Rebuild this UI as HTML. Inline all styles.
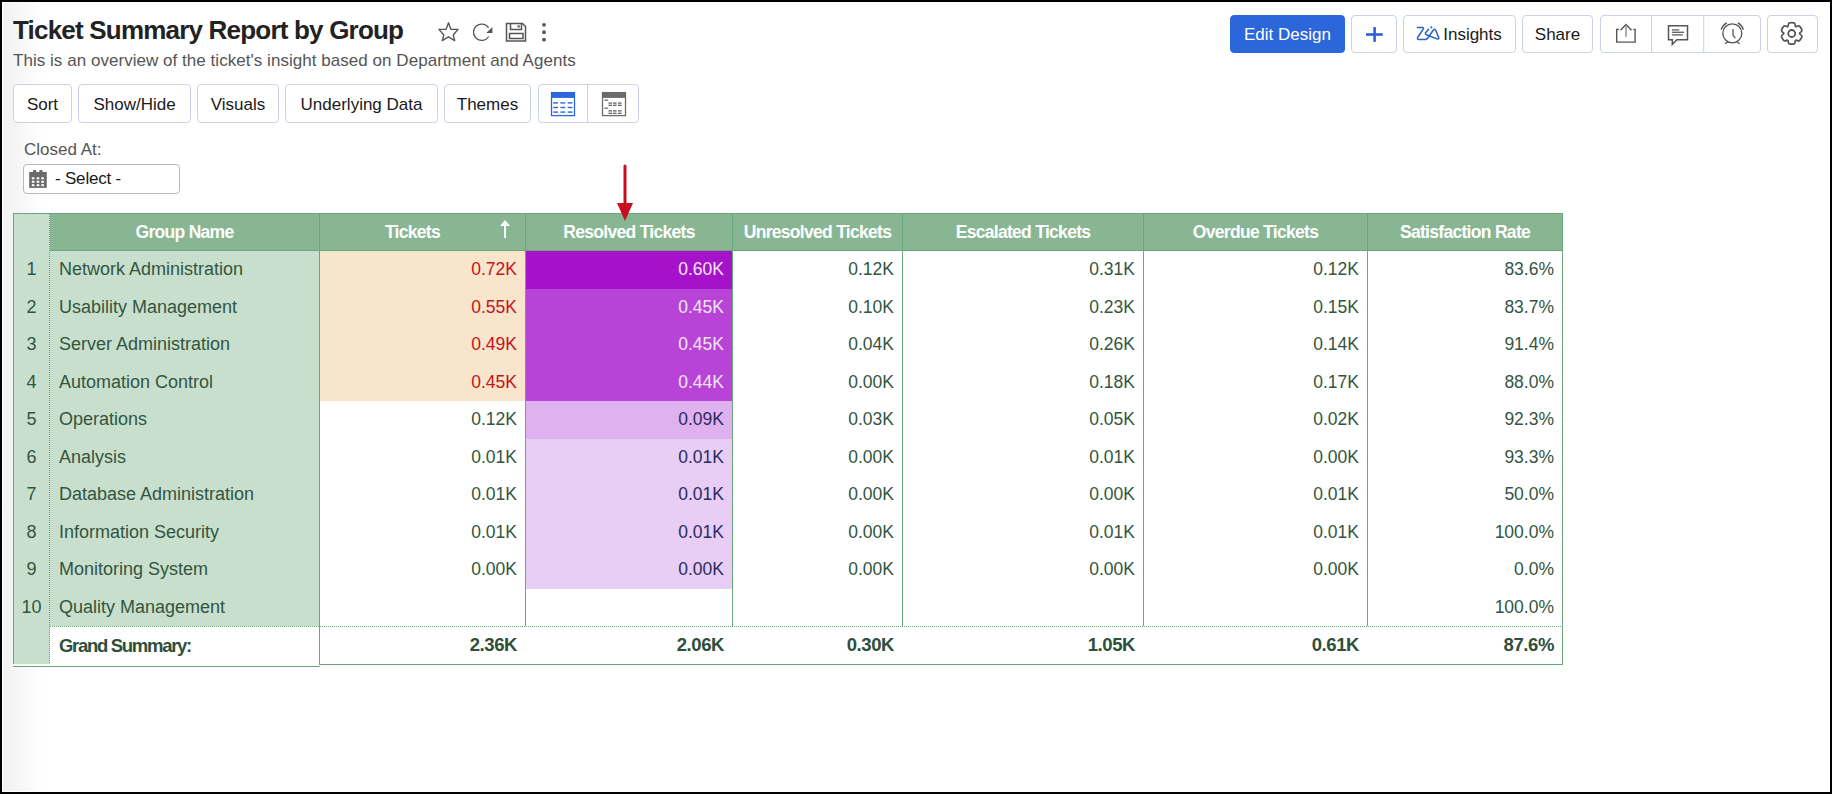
<!DOCTYPE html>
<html><head><meta charset="utf-8">
<style>
*{box-sizing:border-box;margin:0;padding:0}
html,body{width:1832px;height:794px;overflow:hidden;background:#fff}
body{font-family:"Liberation Sans",sans-serif;position:relative}
.r{position:absolute}
.bk{position:absolute;background:#000}
#grad{position:absolute;left:3px;top:3px;width:40px;height:788px;background:linear-gradient(90deg,#f1f1f1,#f5f5f5 30%,#fff)}
.abs{position:absolute;white-space:nowrap}
#title{left:13px;top:15px;font-size:26px;font-weight:bold;color:#222;letter-spacing:-0.8px}
#sub{left:13px;top:51px;font-size:17px;color:#555;letter-spacing:0.04px}
.btn{position:absolute;border:1px solid #c9d1ee;border-radius:4px;background:#fff;font-size:17px;padding-top:2px;color:#1a1a1a;display:flex;align-items:center;justify-content:center;white-space:nowrap}
.tb{top:84px;height:39px}
.rb{top:15px;height:38px}
.hd{position:absolute;top:214px;height:36px;color:#fff;font-weight:bold;font-size:17.5px;letter-spacing:-0.7px;padding-top:1px;display:flex;align-items:center;justify-content:center;white-space:nowrap}
.c{position:absolute;height:37.5px;line-height:36.5px;font-size:17.5px;color:#33553f;white-space:nowrap}
.rn{left:14px;width:35px;text-align:center;font-size:18px}
.nm{left:59px;font-size:18px}
.gs{left:59px;font-weight:bold;color:#2e4f3a;font-size:18.5px;letter-spacing:-1.3px;height:37px;line-height:37px}
.b{font-weight:bold;height:37px;line-height:36px;font-size:18.5px;letter-spacing:-0.4px;color:#2e4f3a}
</style></head>
<body>
<div id="grad"></div>
<div class="bk" style="left:0;top:0;width:1832px;height:2px"></div>
<div class="bk" style="left:0;top:792px;width:1832px;height:2px"></div>
<div class="bk" style="left:0;top:0;width:2px;height:794px"></div>
<div class="bk" style="left:1830px;top:0;width:2px;height:794px"></div>

<div id="title" class="abs">Ticket Summary Report by Group</div>
<div id="sub" class="abs">This is an overview of the ticket's insight based on Department and Agents</div>

<div class="btn tb" style="left:13px;width:59px">Sort</div>
<div class="btn tb" style="left:78px;width:113px">Show/Hide</div>
<div class="btn tb" style="left:197px;width:82px">Visuals</div>
<div class="btn tb" style="left:285px;width:153px">Underlying Data</div>
<div class="btn tb" style="left:444px;width:87px">Themes</div>
<div class="btn tb" style="left:538px;width:101px"></div>

<div class="abs" style="left:24px;top:140px;font-size:17px;color:#555">Closed At:</div>
<div class="btn" style="left:23px;top:164px;width:157px;height:30px;justify-content:flex-start;padding-left:31px;padding-top:0;border-color:#b5b8c2;letter-spacing:-0.2px">- Select -</div>

<div class="btn rb" style="left:1230px;width:115px;background:#2b66da;border-color:#2b66da;color:#fff">Edit Design</div>
<div class="btn rb" style="left:1351px;width:46px"></div>
<div class="btn rb" style="left:1403px;width:113px;padding-left:26px">Insights</div>
<div class="btn rb" style="left:1522px;width:71px">Share</div>
<div class="btn rb" style="left:1600px;width:161px"></div>
<div class="btn rb" style="left:1767px;width:51px"></div>

<div class="r" style="left:14px;top:214px;width:35px;height:450px;background:#c8dfcd"></div>
<div class="r" style="left:50px;top:251px;width:269px;height:375px;background:#c8dfcd"></div>
<div class="r" style="left:50px;top:214px;width:1512px;height:36px;background:#88b693"></div>
<div class="r" style="left:320px;top:251px;width:205px;height:150px;background:#f9e4cc"></div>
<div class="r" style="left:526px;top:251.0px;width:206px;height:37.5px;background:#a512c9"></div>
<div class="r" style="left:526px;top:288.5px;width:206px;height:37.5px;background:#b844d7"></div>
<div class="r" style="left:526px;top:326.0px;width:206px;height:37.5px;background:#b844d7"></div>
<div class="r" style="left:526px;top:363.5px;width:206px;height:37.5px;background:#b844d7"></div>
<div class="r" style="left:526px;top:401.0px;width:206px;height:37.5px;background:#dfb1ef"></div>
<div class="r" style="left:526px;top:438.5px;width:206px;height:37.5px;background:#e8cdf5"></div>
<div class="r" style="left:526px;top:476.0px;width:206px;height:37.5px;background:#e8cdf5"></div>
<div class="r" style="left:526px;top:513.5px;width:206px;height:37.5px;background:#e8cdf5"></div>
<div class="r" style="left:526px;top:551.0px;width:206px;height:37.5px;background:#e8cdf5"></div>
<div class="r" style="left:13px;top:213px;width:1550px;height:1px;background:#6aa77a"></div>
<div class="r" style="left:50px;top:250px;width:1512px;height:1px;background:#6aa77a"></div>
<div class="r" style="left:13px;top:213px;width:1px;height:451px;background:#6aa77a"></div>
<div class="r" style="left:13px;top:666px;width:307px;height:1px;background:#6aa77a"></div>
<div class="r" style="left:319px;top:664px;width:1244px;height:1px;background:#6aa77a"></div>
<div class="r" style="left:1562px;top:213px;width:1px;height:452px;background:#6aa77a"></div>
<div class="r" style="left:319px;top:213px;width:1px;height:452px;background:#6aa77a"></div>
<div class="r" style="left:525px;top:213px;width:1px;height:413px;background:#6aa77a"></div>
<div class="r" style="left:732px;top:213px;width:1px;height:413px;background:#6aa77a"></div>
<div class="r" style="left:902px;top:213px;width:1px;height:413px;background:#6aa77a"></div>
<div class="r" style="left:1143px;top:213px;width:1px;height:413px;background:#6aa77a"></div>
<div class="r" style="left:1367px;top:213px;width:1px;height:413px;background:#6aa77a"></div>
<div class="r" style="left:49px;top:214px;width:1px;height:450px;background:repeating-linear-gradient(180deg,#6aa77a 0 1px,#c8dfcd 1px 2px)"></div>
<div class="r" style="left:50px;top:626px;width:1512px;height:1px;background:repeating-linear-gradient(90deg,#6aa77a 0 1px,transparent 1px 2px)"></div>
<div class="r" style="left:50px;top:627px;width:269px;height:37px;background:#fff"></div>
<div class="hd" style="left:50px;width:269px;">Group Name</div>
<div class="hd" style="left:320px;width:205px;padding-right:20px;">Tickets</div>
<div class="hd" style="left:526px;width:206px;">Resolved Tickets</div>
<div class="hd" style="left:733px;width:169px;">Unresolved Tickets</div>
<div class="hd" style="left:903px;width:240px;">Escalated Tickets</div>
<div class="hd" style="left:1144px;width:223px;">Overdue Tickets</div>
<div class="hd" style="left:1368px;width:194px;">Satisfaction Rate</div>
<svg class="r" style="left:498px;top:218px" width="14" height="22" viewBox="0 0 14 22"><path d="M2 8 L7 2 L12 8 Z" fill="#fff"/><rect x="6" y="7" width="2" height="13" fill="#fff"/></svg>
<div class="c rn" style="top:251.0px">1</div>
<div class="c nm" style="top:251.0px">Network Administration</div>
<div class="c num" style="top:251.0px;right:1315px;color:#c41420">0.72K</div>
<div class="c num" style="top:251.0px;right:1108px;color:#f3e6f7">0.60K</div>
<div class="c num" style="top:251.0px;right:938px;color:#33553f">0.12K</div>
<div class="c num" style="top:251.0px;right:697px;color:#33553f">0.31K</div>
<div class="c num" style="top:251.0px;right:473px;color:#33553f">0.12K</div>
<div class="c num" style="top:251.0px;right:278px;color:#33553f">83.6%</div>
<div class="c rn" style="top:288.5px">2</div>
<div class="c nm" style="top:288.5px">Usability Management</div>
<div class="c num" style="top:288.5px;right:1315px;color:#c41420">0.55K</div>
<div class="c num" style="top:288.5px;right:1108px;color:#f3e6f7">0.45K</div>
<div class="c num" style="top:288.5px;right:938px;color:#33553f">0.10K</div>
<div class="c num" style="top:288.5px;right:697px;color:#33553f">0.23K</div>
<div class="c num" style="top:288.5px;right:473px;color:#33553f">0.15K</div>
<div class="c num" style="top:288.5px;right:278px;color:#33553f">83.7%</div>
<div class="c rn" style="top:326.0px">3</div>
<div class="c nm" style="top:326.0px">Server Administration</div>
<div class="c num" style="top:326.0px;right:1315px;color:#c41420">0.49K</div>
<div class="c num" style="top:326.0px;right:1108px;color:#f3e6f7">0.45K</div>
<div class="c num" style="top:326.0px;right:938px;color:#33553f">0.04K</div>
<div class="c num" style="top:326.0px;right:697px;color:#33553f">0.26K</div>
<div class="c num" style="top:326.0px;right:473px;color:#33553f">0.14K</div>
<div class="c num" style="top:326.0px;right:278px;color:#33553f">91.4%</div>
<div class="c rn" style="top:363.5px">4</div>
<div class="c nm" style="top:363.5px">Automation Control</div>
<div class="c num" style="top:363.5px;right:1315px;color:#c41420">0.45K</div>
<div class="c num" style="top:363.5px;right:1108px;color:#f3e6f7">0.44K</div>
<div class="c num" style="top:363.5px;right:938px;color:#33553f">0.00K</div>
<div class="c num" style="top:363.5px;right:697px;color:#33553f">0.18K</div>
<div class="c num" style="top:363.5px;right:473px;color:#33553f">0.17K</div>
<div class="c num" style="top:363.5px;right:278px;color:#33553f">88.0%</div>
<div class="c rn" style="top:401.0px">5</div>
<div class="c nm" style="top:401.0px">Operations</div>
<div class="c num" style="top:401.0px;right:1315px;color:#33553f">0.12K</div>
<div class="c num" style="top:401.0px;right:1108px;color:#2d2a5c">0.09K</div>
<div class="c num" style="top:401.0px;right:938px;color:#33553f">0.03K</div>
<div class="c num" style="top:401.0px;right:697px;color:#33553f">0.05K</div>
<div class="c num" style="top:401.0px;right:473px;color:#33553f">0.02K</div>
<div class="c num" style="top:401.0px;right:278px;color:#33553f">92.3%</div>
<div class="c rn" style="top:438.5px">6</div>
<div class="c nm" style="top:438.5px">Analysis</div>
<div class="c num" style="top:438.5px;right:1315px;color:#33553f">0.01K</div>
<div class="c num" style="top:438.5px;right:1108px;color:#2d2a5c">0.01K</div>
<div class="c num" style="top:438.5px;right:938px;color:#33553f">0.00K</div>
<div class="c num" style="top:438.5px;right:697px;color:#33553f">0.01K</div>
<div class="c num" style="top:438.5px;right:473px;color:#33553f">0.00K</div>
<div class="c num" style="top:438.5px;right:278px;color:#33553f">93.3%</div>
<div class="c rn" style="top:476.0px">7</div>
<div class="c nm" style="top:476.0px">Database Administration</div>
<div class="c num" style="top:476.0px;right:1315px;color:#33553f">0.01K</div>
<div class="c num" style="top:476.0px;right:1108px;color:#2d2a5c">0.01K</div>
<div class="c num" style="top:476.0px;right:938px;color:#33553f">0.00K</div>
<div class="c num" style="top:476.0px;right:697px;color:#33553f">0.00K</div>
<div class="c num" style="top:476.0px;right:473px;color:#33553f">0.01K</div>
<div class="c num" style="top:476.0px;right:278px;color:#33553f">50.0%</div>
<div class="c rn" style="top:513.5px">8</div>
<div class="c nm" style="top:513.5px">Information Security</div>
<div class="c num" style="top:513.5px;right:1315px;color:#33553f">0.01K</div>
<div class="c num" style="top:513.5px;right:1108px;color:#2d2a5c">0.01K</div>
<div class="c num" style="top:513.5px;right:938px;color:#33553f">0.00K</div>
<div class="c num" style="top:513.5px;right:697px;color:#33553f">0.01K</div>
<div class="c num" style="top:513.5px;right:473px;color:#33553f">0.01K</div>
<div class="c num" style="top:513.5px;right:278px;color:#33553f">100.0%</div>
<div class="c rn" style="top:551.0px">9</div>
<div class="c nm" style="top:551.0px">Monitoring System</div>
<div class="c num" style="top:551.0px;right:1315px;color:#33553f">0.00K</div>
<div class="c num" style="top:551.0px;right:1108px;color:#2d2a5c">0.00K</div>
<div class="c num" style="top:551.0px;right:938px;color:#33553f">0.00K</div>
<div class="c num" style="top:551.0px;right:697px;color:#33553f">0.00K</div>
<div class="c num" style="top:551.0px;right:473px;color:#33553f">0.00K</div>
<div class="c num" style="top:551.0px;right:278px;color:#33553f">0.0%</div>
<div class="c rn" style="top:588.5px">10</div>
<div class="c nm" style="top:588.5px">Quality Management</div>
<div class="c num" style="top:588.5px;right:278px;color:#33553f">100.0%</div>
<div class="c gs" style="top:627px">Grand Summary:</div>
<div class="c num b" style="top:627px;right:1315px">2.36K</div>
<div class="c num b" style="top:627px;right:1108px">2.06K</div>
<div class="c num b" style="top:627px;right:938px">0.30K</div>
<div class="c num b" style="top:627px;right:697px">1.05K</div>
<div class="c num b" style="top:627px;right:473px">0.61K</div>
<div class="c num b" style="top:627px;right:278px">87.6%</div>
<svg class="r" style="left:0;top:0;pointer-events:none" width="1832" height="794" viewBox="0 0 1832 794">
<g fill="none" stroke="#555" stroke-width="1.5" stroke-linejoin="miter">
<!-- star -->
<path d="M448.5 22.8 L451 29.4 L458.1 29.4 L453.3 35 L454.7 40.6 L448.5 36.8 L442.3 40.6 L443.8 35 L438.9 29.4 L446 29.4 Z" stroke-width="1.35" stroke-linejoin="round"/>
<!-- refresh -->
<path d="M488.7 36.5 A8.2 8.2 0 1 1 488.6 27.8" stroke-width="1.25"/>
<!-- save -->
<path d="M506.5 23.5 H522.5 L525.5 26.5 V41 H506.5 Z"/>
<path d="M510.5 23.5 V29.5 H521.5 V23.5"/>
<rect x="509.5" y="33.5" width="13.5" height="5"/>
<!-- upload -->
<path d="M1619 29.4 H1616.7 V42.1 H1635.1 V29.4 H1633.3" stroke-width="1.4"/>
<path d="M1620.5 30.3 L1626 24.6 L1631.5 30.3" stroke-width="1.4"/>
<!-- comment -->
<path d="M1668.5 25.8 H1687.5 V39.8 H1676.8 L1672.3 44.5 V39.8 H1668.5 Z" stroke-width="1.5"/>
<!-- alarm -->
<circle cx="1732.3" cy="33.3" r="9.5" stroke-width="1.3"/>
<path d="M1721.08 29.65 A11.8 11.8 0 0 1 1726.76 22.88" stroke-width="1.3"/>
<path d="M1737.84 22.88 A11.8 11.8 0 0 1 1743.52 29.65" stroke-width="1.3"/>
<path d="M1733 29 V35.3 L1735.4 38.2" stroke-width="1.3"/>
<path d="M1725.2 43.6 L1728.2 41.5 M1736.7 41.5 L1739.5 43.7" stroke-width="1.3"/>
<!-- gear -->
<circle cx="1791.7" cy="33.5" r="3.5" stroke-width="1.8"/>
</g>
<rect x="1625.2" y="25.5" width="1.6" height="11.4" fill="#999"/>
<g fill="#6a6a6a">
<rect x="1671.9" y="29.2" width="7.3" height="1.4"/>
<rect x="1671.9" y="31.6" width="12.2" height="1.4"/>
<rect x="1671.9" y="34.2" width="10.9" height="1.4"/>
</g>
<path d="M492.4 27 V32.9 H486.3 Z" fill="#555"/>
<rect x="517.5" y="25.3" width="2.4" height="2.2" fill="#666"/>
<circle cx="544" cy="24.8" r="1.9" fill="#555"/>
<circle cx="544" cy="32.2" r="1.9" fill="#555"/>
<circle cx="544" cy="39.7" r="1.9" fill="#555"/>
<!-- plus -->
<rect x="1373.3" y="27.1" width="2.6" height="14.7" fill="#2a5fd6"/>
<rect x="1366" y="33.2" width="16.8" height="2.6" fill="#2a5fd6"/>
<!-- zia -->
<g fill="none" stroke="#2662c4" stroke-width="1.5" stroke-linejoin="round" stroke-linecap="round">
<path d="M1417.3 27.5 H1422.4 Q1424.2 27.6 1423.2 29.2 L1417.9 37 Q1416.6 39.4 1419.2 39.4 H1425.6 Q1426.9 39.4 1427.6 38.2 L1433.4 30 Q1434.9 28.4 1435.7 30.2 L1438.6 37.2 Q1439.4 39.6 1437 38.9 L1426.4 34.7 Q1424.8 33.9 1425.6 32.8 L1428.6 29.3"/>
</g>
<circle cx="1431.4" cy="27.3" r="1.1" fill="#2662c4"/>
<!-- red arrow -->
<rect x="623.5" y="164.5" width="3" height="40" rx="1.5" fill="#c80f22"/>
<path d="M617 203 H633 L625 221 Z" fill="#c80f22"/>
<!-- calendar -->
<g fill="#6b6b6b">
<rect x="29.2" y="172" width="17.6" height="15.9"/>
<rect x="33" y="170" width="3.3" height="4" rx="1"/>
<rect x="39.3" y="170" width="3.3" height="4" rx="1"/>
</g>
<g fill="#fff">
<rect x="31.8" y="177.3" width="2.6" height="2"/><rect x="36.7" y="177.3" width="2.6" height="2"/><rect x="41.3" y="177.3" width="2.6" height="2"/>
<rect x="31.8" y="180.8" width="2.6" height="2"/><rect x="36.7" y="180.8" width="2.6" height="2"/><rect x="41.3" y="180.8" width="2.6" height="2"/>
<rect x="31.8" y="184.2" width="2.6" height="2"/><rect x="36.7" y="184.2" width="2.6" height="2"/><rect x="41.3" y="184.2" width="2.6" height="2"/>
</g>
<!-- dividers -->
<rect x="587" y="85" width="1" height="37" fill="#c9d1ee"/>
<rect x="1651" y="16" width="1" height="36" fill="#c9d1ee"/>
<rect x="1703.2" y="16" width="1" height="36" fill="#c9d1ee"/>
<!-- blue table icon -->
<rect x="551.5" y="92.6" width="23" height="23" fill="none" stroke="#2b66da" stroke-width="1.3"/>
<rect x="551" y="92.3" width="24" height="5.6" fill="#2b66da"/>
<g fill="#2b66da">
<rect x="553.2" y="102.2" width="4.8" height="1.4"/><rect x="560.4" y="102.2" width="4.8" height="1.4"/><rect x="567.7" y="102.2" width="4.8" height="1.4"/>
<rect x="553.2" y="106.8" width="4.8" height="1.4"/><rect x="560.4" y="106.8" width="4.8" height="1.4"/><rect x="567.7" y="106.8" width="4.8" height="1.4"/>
<rect x="553.2" y="111.4" width="4.8" height="1.4"/><rect x="560.4" y="111.4" width="4.8" height="1.4"/><rect x="567.7" y="111.4" width="4.8" height="1.4"/>
</g>
<!-- grey table icon -->
<rect x="602.5" y="92.6" width="23" height="23" fill="none" stroke="#6b6a6d" stroke-width="1.3"/>
<rect x="602" y="92.3" width="24" height="5.6" fill="#6b6a6d"/>
<g fill="#555">
<rect x="604.4" y="99.6" width="3.8" height="1.1"/>
<rect x="608.5" y="102.5" width="3.5" height="1.2"/><rect x="613" y="102.5" width="3.6" height="1.2"/><rect x="618" y="102.5" width="3.6" height="1.2"/>
<rect x="608.5" y="104.7" width="3.5" height="1.2"/><rect x="613" y="104.7" width="3.6" height="1.2"/><rect x="618" y="104.7" width="3.6" height="1.2"/>
<rect x="604.4" y="107.6" width="3.8" height="1.1"/>
<rect x="608.5" y="110.3" width="3.5" height="1.2"/><rect x="613" y="110.3" width="3.6" height="1.2"/><rect x="618" y="110.3" width="3.6" height="1.2"/>
<rect x="608.5" y="112.7" width="3.5" height="1.2"/><rect x="613" y="112.7" width="3.6" height="1.2"/><rect x="618" y="112.7" width="3.6" height="1.2"/>
</g>
<path id="gear" d="M1788.07 26.27 Q1788.48 22.88 1789.29 22.97 A10.7 10.7 0 0 1 1794.11 22.97 Q1794.92 22.88 1795.33 26.27 A8.0 8.0 0 0 1 1796.06 26.69 Q1799.20 25.36 1799.53 26.10 A10.7 10.7 0 0 1 1801.93 30.27 Q1802.42 30.93 1799.69 32.98 A8.0 8.0 0 0 1 1799.69 33.82 Q1802.42 35.87 1801.93 36.53 A10.7 10.7 0 0 1 1799.53 40.70 Q1799.20 41.44 1796.06 40.11 A8.0 8.0 0 0 1 1795.33 40.53 Q1794.92 43.92 1794.11 43.83 A10.7 10.7 0 0 1 1789.29 43.83 Q1788.48 43.92 1788.07 40.53 A8.0 8.0 0 0 1 1787.34 40.11 Q1784.20 41.44 1783.87 40.70 A10.7 10.7 0 0 1 1781.47 36.53 Q1780.98 35.87 1783.71 33.82 A8.0 8.0 0 0 1 1783.71 32.98 Q1780.98 30.93 1781.47 30.27 A10.7 10.7 0 0 1 1783.87 26.10 Q1784.20 25.36 1787.34 26.69 A8.0 8.0 0 0 1 1788.07 26.27 Z" fill="none" stroke="#555" stroke-width="1.7" stroke-linejoin="round"/>
</svg>

</body></html>
